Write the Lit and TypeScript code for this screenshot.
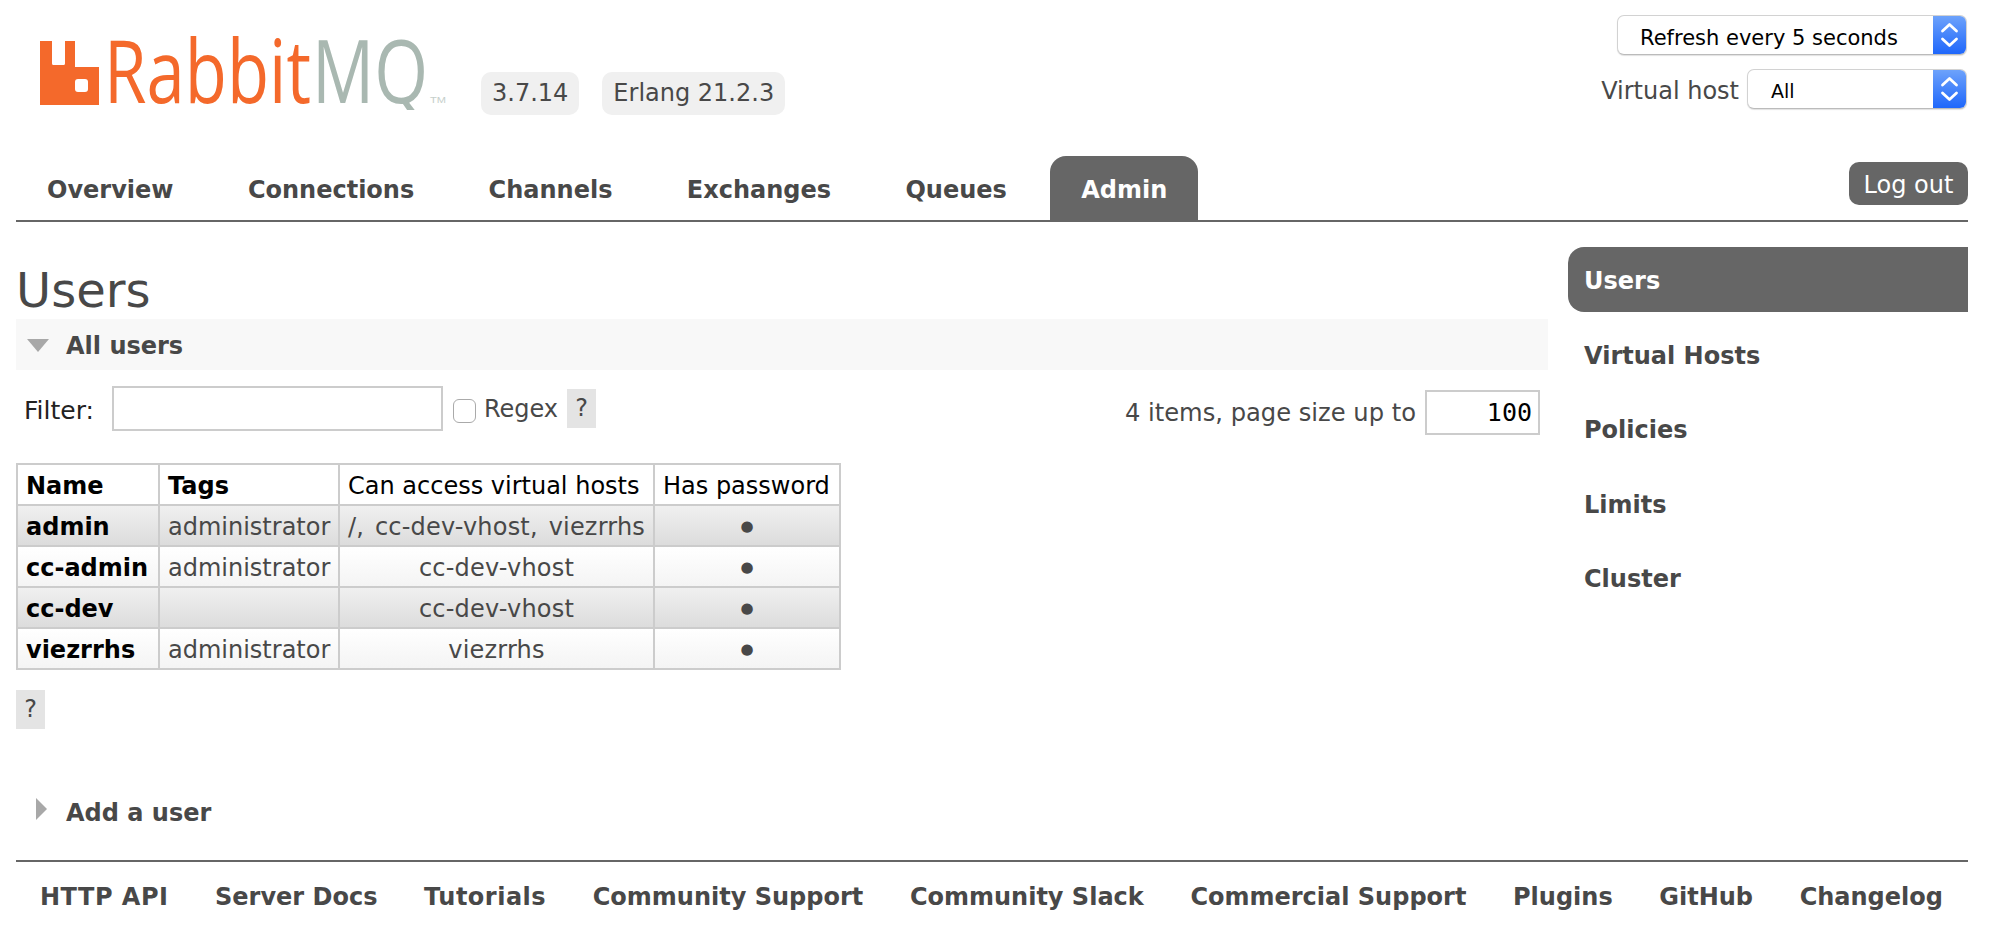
import { LitElement, html, css } from "lit";
import { customElement } from "lit/decorators.js";

const chevrons = html`<svg class="chev" width="33" height="40" viewBox="0 0 33 40" aria-hidden="true">
  <path d="M9.500 16 L16.500 9.500 L23.500 16 M9.500 24 L16.500 30.500 L23.500 24" fill="none" stroke="#fff" stroke-width="2.800" stroke-linecap="round" stroke-linejoin="round"/></svg>`;

const logo = html`<svg class="logo" width="420" height="74" viewBox="38 36 420 74" role="img" aria-label="RabbitMQ">
  <path fill="#f4692b" d="M40 41h12v22.500q0 1.500 1.500 1.500h10q1.500 0 1.500-1.500V41h10v26H99v38H40z"/>
  <rect x="75" y="79" width="13" height="13" rx="3" fill="#fff"/>
  <text x="104" y="103" font-family="'Open Sans'" font-weight="400" font-size="88" fill="#f4692b" textLength="207" lengthAdjust="spacingAndGlyphs">Rabbit</text>
  <text x="312" y="103" font-family="'Open Sans'" font-weight="400" font-size="88" fill="#a9b8b1" textLength="116" lengthAdjust="spacingAndGlyphs">MQ</text>
  <text x="430" y="103" font-family="'Liberation Sans'" font-size="9" fill="#c6cfcb" textLength="16" lengthAdjust="spacingAndGlyphs">TM</text>
</svg>`;

const users = [
  { name: "admin", tags: "administrator", hosts: "/, cc-dev-vhost, viezrrhs" },
  { name: "cc-admin", tags: "administrator", hosts: "cc-dev-vhost" },
  { name: "cc-dev", tags: "", hosts: "cc-dev-vhost" },
  { name: "viezrrhs", tags: "administrator", hosts: "viezrrhs" },
];

const tabs = ["Overview", "Connections", "Channels", "Exchanges", "Queues", "Admin"];
const side = ["Users", "Virtual Hosts", "Policies", "Limits", "Cluster"];
const foot = ["HTTP API", "Server Docs", "Tutorials", "Community Support", "Community Slack", "Commercial Support", "Plugins", "GitHub", "Changelog"];

@customElement("app-root")
export class AppRoot extends LitElement {
  static styles = css`
    :host {
      display: block;
      width: 1989px;
      height: 931px;
      box-sizing: border-box;
      padding: 0 21px 0 16px;
      background: #fff;
      color: #484848;
      font-family: "DejaVu Sans", Verdana, sans-serif;
      font-size: 24px;
      overflow: hidden;
    }
    .top { display: flex; justify-content: space-between; height: 156px; }
    .brand { display: flex; align-items: flex-start; padding: 36px 0 0 22px; }
    .logo { display: block; margin-right: 23px; flex: none; }
    .badge {
      margin: 36px 23px 0 0;
      height: 43px; line-height: 43px;
      padding: 0 11px;
      background: #f0f0f0;
      border-radius: 10px;
    }
    .controls { display: flex; flex-direction: column; align-items: flex-end; padding: 15px 1px 0 0; gap: 14px; }
    .row { display: flex; align-items: center; gap: 8px; }
    .row > span { padding-top: 3px; }
    .select {
      position: relative;
      box-sizing: border-box;
      height: 40px;
      border: 1px solid #d2d2d2;
      border-bottom-color: #bbb;
      box-shadow: 0 1px 1px rgba(0,0,0,.12);
      border-radius: 7px;
      background: #fff;
      overflow: hidden;
      display: flex; align-items: center;
      color: #000;
    }
    .select.refresh { width: 350px; padding: 5px 0 0 22px; font-size: 21px; }
    .select.vhost { width: 220px; padding: 3px 0 0 23px; font-size: 19px; }
    .arrow {
      position: absolute; right: 0; top: 0; bottom: 0; width: 33px;
      background: linear-gradient(#6da2fb, #1f67fb);
    }
    .chev { display: block; position: absolute; top: -1px; left: 0; }

    nav { display: flex; align-items: flex-end; height: 64px; border-bottom: 2px solid #666; position: relative; }
    .tab {
      height: 64px; line-height: 69px; padding: 0 31px; margin-right: 12.400px;
      font-weight: 700; color: #484848;
      box-sizing: border-box;
    }
    .tab.on { background: #666; color: #fff; border-radius: 16px 16px 0 0; margin-right: 0; }
    .logout {
      margin: 0 0 15px auto;
      height: 43px; line-height: 46px; width: 119px; text-align: center;
      background: #666; color: #fff; border-radius: 10px;
      align-self: flex-end;
    }

    .body { display: flex; gap: 20px; height: 638px; }
    main { width: 1532px; flex: none; }
    h1 { margin: 0; font-weight: 400; font-size: 48px; line-height: 60px; height: 97px; padding-top: 38px; box-sizing: border-box; color: #484848; }
    .sect {
      display: flex; align-items: center; gap: 17px;
      height: 51px; padding: 2px 0 0 11px; box-sizing: border-box;
      background: #f8f8f8;
      font-weight: 700;
    }
    .sect.closed { background: none; margin-top: 57px; gap: 11px; padding-top: 2px; }
    .tri-d { width: 0; height: 0; border: 11px solid transparent; border-top: 13px solid #a8a8a8; border-bottom: 0; }
    .tri-r { width: 0; height: 0; margin-left: 9px; margin-right: 8px; margin-top: -7px; border: 11px solid transparent; border-left: 11px solid #a8a8a8; border-right: 0; }

    .filter { display: flex; align-items: center; height: 65px; margin-top: 6px; padding-left: 8px; }
    .filter label { color: #222; font-size: 25px; margin-right: 18px; padding-top: 4px; }
    .input { box-sizing: border-box; border: 2px solid #ccc; background: #fff; height: 45px; }
    .input.f { width: 331px; }
    .check { box-sizing: border-box; width: 23px; height: 24px; border: 1px solid #aaa; border-radius: 6px; margin: 4px 8px 0 10px; background: #fff; }
    .help { display: inline-block; width: 29px; height: 39px; line-height: 39px; text-align: center; background: #e4e4e4; }
    .filter .help { margin-left: 9px; }
    .pager { margin-left: auto; display: flex; align-items: center; gap: 9px; padding: 8px 8px 0 0; font-size: 24.200px; }
    .input.size {
      width: 115px; text-align: right; padding-right: 6px; line-height: 41px;
      font-family: "DejaVu Sans Mono", monospace; font-size: 25px; color: #000;
    }

    table { border-collapse: collapse; table-layout: fixed; width: 823px; margin-top: 22px; border: 2px solid #ccc; }
    col.c1 { width: 142px; }
    col.c2 { width: 180px; }
    col.c3 { width: 315px; }
    col.c4 { width: 186px; }
    th, td { border: 2px solid #ccc; padding: 2px 8px 0; height: 41px; white-space: nowrap; box-sizing: border-box; }
    th { font-weight: 400; color: #000; text-align: left; background: #fff; }
    th.b, td.n { font-weight: 700; color: #000; text-align: left; }
    td { text-align: center; }
    td.l { text-align: left; }
    td.h { word-spacing: 3px; letter-spacing: .2px; }
    td.dot { font-size: 15px; line-height: 1; }
    tr.alt1 td { background: linear-gradient(#f0f0f0, #dcdcdc); }
    tr.alt2 td { background: linear-gradient(#fff, #f4f4f4); }
    .q2 { margin-top: 20px; display: block; }

    aside { width: 400px; flex: none; padding-top: 25px; }
    .item { height: 65px; line-height: 68px; margin-bottom: 9.600px; padding-left: 16px; font-weight: 700; }
    .item.on { background: #666; color: #fff; border-radius: 16px 0 0 16px; line-height: 69px; }

    footer { border-top: 2px solid #666; display: flex; height: 70px; align-items: center; padding: 0 25px 0 24px; justify-content: space-between; font-weight: 700; }
    footer .wide { letter-spacing: .5px; }
  `;

  render() {
    return html`
      <div class="top">
        <div class="brand">
          ${logo}
          <span class="badge">3.7.14</span>
          <span class="badge">Erlang 21.2.3</span>
        </div>
        <div class="controls">
          <div class="select refresh">Refresh every 5 seconds<span class="arrow">${chevrons}</span></div>
          <div class="row"><span>Virtual host</span><div class="select vhost">All<span class="arrow">${chevrons}</span></div></div>
        </div>
      </div>
      <nav>
        ${tabs.map((t) => html`<div class="tab ${t === "Admin" ? "on" : ""}">${t}</div>`)}
        <div class="logout">Log out</div>
      </nav>
      <div class="body">
        <main>
          <h1>Users</h1>
          <div class="sect"><span class="tri-d"></span>All users</div>
          <div class="filter">
            <label>Filter:</label>
            <div class="input f"></div>
            <div class="check"></div>
            <span>Regex</span>
            <span class="help">?</span>
            <div class="pager"><span>4 items, page size up to</span><div class="input size">100</div></div>
          </div>
          <table>
            <colgroup><col class="c1" /><col class="c2" /><col class="c3" /><col class="c4" /></colgroup>
            <tr><th class="b">Name</th><th class="b">Tags</th><th>Can access virtual hosts</th><th>Has password</th></tr>
            ${users.map((u, i) => html`<tr class="${i % 2 ? "alt2" : "alt1"}">
              <td class="n">${u.name}</td><td class="l">${u.tags}</td><td class="h">${u.hosts}</td><td class="dot">●</td></tr>`)}
          </table>
          <span class="help q2">?</span>
          <div class="sect closed"><span class="tri-r"></span>Add a user</div>
        </main>
        <aside>
          ${side.map((s, i) => html`<div class="item ${i === 0 ? "on" : ""}">${s}</div>`)}
        </aside>
      </div>
      <footer>${foot.map((f, i) => html`<span class="${i === 0 || i === 2 ? "wide" : ""}">${f}</span>`)}</footer>
    `;
  }
}
